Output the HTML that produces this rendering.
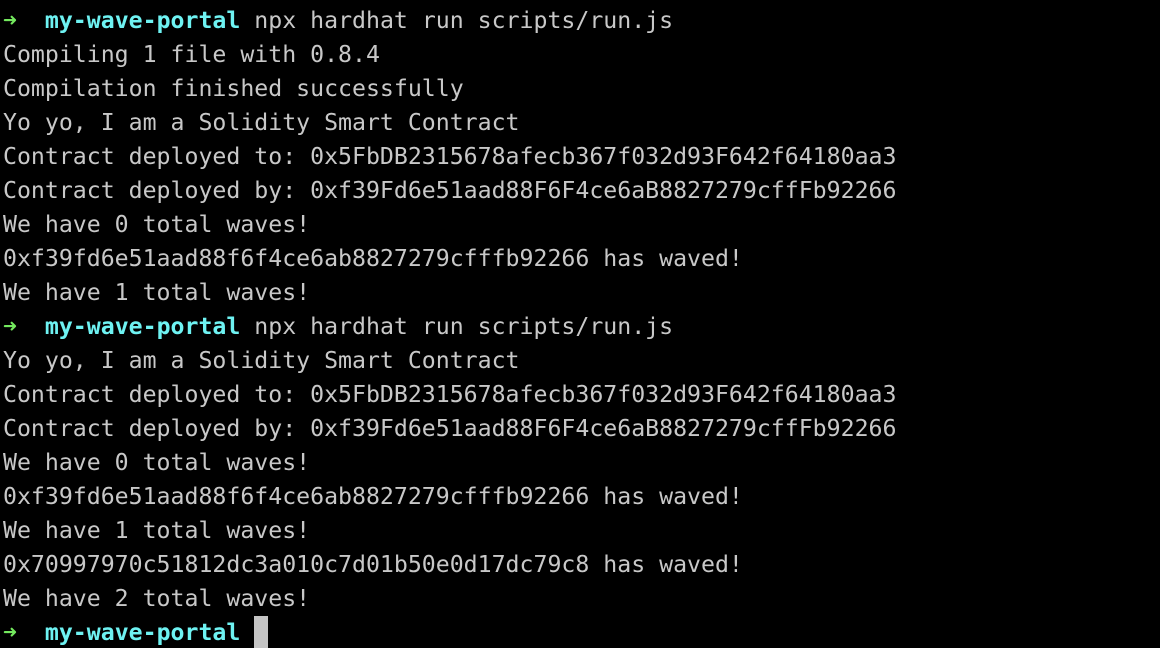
<!DOCTYPE html>
<html><head><meta charset="utf-8"><style>
html,body{margin:0;padding:0;background:#000;width:1160px;height:648px;overflow:hidden}
pre{margin:0;padding:4px 0 0 3px;font-family:"DejaVu Sans Mono","Liberation Mono",monospace;font-size:23.2px;line-height:34px;color:#c8c8c8;white-space:pre}
.g{color:#74e95e;font-weight:bold}
.c{color:#6ef2f2;font-weight:bold}
.cur{display:inline-block;width:14px;height:34px;background:#c4c4c4;vertical-align:top}
</style></head><body><pre><span class="g">➜</span>  <span class="c">my-wave-portal</span> npx hardhat run scripts/run.js
Compiling 1 file with 0.8.4
Compilation finished successfully
Yo yo, I am a Solidity Smart Contract
Contract deployed to: 0x5FbDB2315678afecb367f032d93F642f64180aa3
Contract deployed by: 0xf39Fd6e51aad88F6F4ce6aB8827279cffFb92266
We have 0 total waves!
0xf39fd6e51aad88f6f4ce6ab8827279cfffb92266 has waved!
We have 1 total waves!
<span class="g">➜</span>  <span class="c">my-wave-portal</span> npx hardhat run scripts/run.js
Yo yo, I am a Solidity Smart Contract
Contract deployed to: 0x5FbDB2315678afecb367f032d93F642f64180aa3
Contract deployed by: 0xf39Fd6e51aad88F6F4ce6aB8827279cffFb92266
We have 0 total waves!
0xf39fd6e51aad88f6f4ce6ab8827279cfffb92266 has waved!
We have 1 total waves!
0x70997970c51812dc3a010c7d01b50e0d17dc79c8 has waved!
We have 2 total waves!
<span class="g">➜</span>  <span class="c">my-wave-portal</span> <span class="cur"></span></pre></body></html>
